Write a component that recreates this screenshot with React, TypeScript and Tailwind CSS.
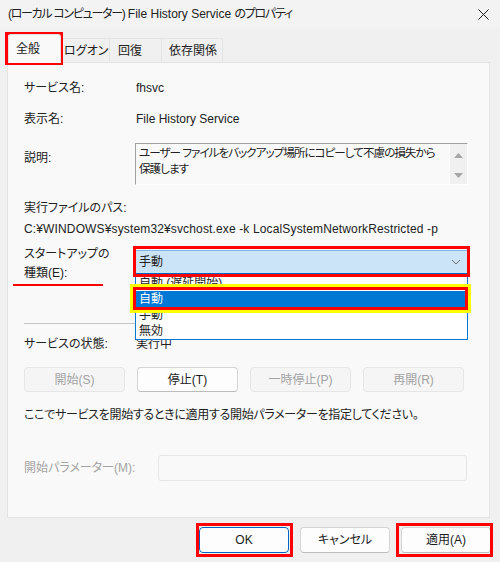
import React from "react";

function Btn({ label, disabled, primary, className = "" }: { label: string; disabled?: boolean; primary?: boolean; className?: string }) {
  return (
    <div
      className={
        "flex items-center justify-center rounded-[4px] border " +
        (disabled
          ? "bg-[#f5f5f5] border-[#e6e6e6] text-[#a3a3a3] "
          : primary
          ? "bg-[#fdfdfd] border-[#0067c0] text-[#1b1b1b] "
          : "bg-[#fdfdfd] border-[#d4d4d4] border-b-[#bcbcbc] text-[#1b1b1b] ") +
        className
      }
    >
      {label}
    </div>
  );
}

export default function App() {
  return (
    <div className="relative w-[500px] h-[562px] overflow-hidden bg-[#f0f0f0] text-[12px] text-[#222222] font-['Liberation_Sans','Noto_Sans_CJK_JP',sans-serif] [font-feature-settings:'palt']">
      {/* Title bar */}
      <div className="h-[28px] flex items-center justify-between pl-[8px] pr-[11px] bg-[#f3f3f3]">
        <span className="whitespace-nowrap">
          <span className="tracking-[-1.3px]">(ローカル コンピューター)</span> File History Service{" "}
          <span className="tracking-[-1.3px]">のプロパティ</span>
        </span>
        <svg width="11" height="11" viewBox="0 0 11 11">
          <path d="M0.5 0.5l10 10M10.5 0.5l-10 10" stroke="#1b1b1b" strokeWidth="1" />
        </svg>
      </div>

      {/* Tabs */}
      <div className="h-[34px] flex items-end pl-[8px]">
        <div className="relative z-10 -mb-px h-[29px] w-[53px] pl-[7px] flex items-center bg-[#f9f9f9] border border-b-0 border-[#e3e3e3] rounded-t-[3px]">全般</div>
        <div className="h-[24px] w-[49px] pl-[3px] flex items-center border-t border-r border-[#e3e3e3] bg-[#f0f0f0]">ログオン</div>
        <div className="h-[24px] w-[52px] pl-[8px] flex items-center border-t border-r border-[#e3e3e3] bg-[#f0f0f0]">回復</div>
        <div className="h-[24px] w-[61px] pl-[7px] flex items-center border-t border-r border-[#e3e3e3] bg-[#f0f0f0]">依存関係</div>
      </div>

      {/* Panel */}
      <div className="ml-[7px] w-[483px] h-[456px] border border-[#e3e3e3] bg-[#f9f9f9]">
        <div className="pl-[16px] flex flex-col">
          <div className="mt-[17px] h-4 leading-4 flex">
            <span className="w-[112px]">サービス名:</span>
            <span>fhsvc</span>
          </div>
          <div className="mt-[15px] h-4 leading-4 flex">
            <span className="w-[112px]">表示名:</span>
            <span>File History Service</span>
          </div>
          <div className="mt-[16px] flex items-start">
            <span className="w-[111px] mt-[7px] leading-4">説明:</span>
            <div className="w-[333px] h-[42px] flex border-t border-l border-[#a0a0a0] border-b border-r border-b-[#ffffff] border-r-[#ffffff]">
              <div className="flex-1 min-w-0 pl-[3px] pt-[1px] leading-4 whitespace-nowrap text-[11.6px] tracking-[-1px]">
                ユーザー ファイルをバックアップ場所にコピーして不慮の損失から
                <br />
                保護します
              </div>
              <div className="w-[17px] shrink-0 bg-[#f0f0f0] flex flex-col items-center justify-between pt-[9px] pb-[6px]">
                <svg width="9" height="5" viewBox="0 0 9 5">
                  <path d="M0 5L4.5 0L9 5Z" fill="#a6a6a6" />
                </svg>
                <svg width="9" height="5" viewBox="0 0 9 5">
                  <path d="M0 0L9 0L4.5 5Z" fill="#a6a6a6" />
                </svg>
              </div>
            </div>
          </div>
          <div className="mt-[15px] h-4 leading-4">実行ファイルのパス:</div>
          <div className="mt-[5px] h-4 leading-4 whitespace-nowrap tracking-[0.14px]">C:¥WINDOWS¥system32¥svchost.exe -k LocalSystemNetworkRestricted -p</div>
          <div className="mt-[8px] flex items-start">
            <span className="w-[111px] leading-[19px]">
              スタートアップの
              <br />
              種類(E):
            </span>
            <div className="mt-[5px] w-[333px] h-[24px] flex items-center justify-between pl-[3px] pr-[6px] bg-[#cce4f7] border border-[#7eb4ea] border-b-[#0067c0]">
              <span>手動</span>
              <svg width="10" height="6" viewBox="0 0 10 6">
                <path d="M1 1l4 4 4-4" fill="none" stroke="#6e6e6e" strokeWidth="1" />
              </svg>
            </div>
          </div>
          <div className="mt-[40px] w-[443px] h-px bg-[#c4c4c4]" />
          <div className="mt-[12px] h-4 leading-4 flex">
            <span className="w-[112px]">サービスの状態:</span>
            <span>実行中</span>
          </div>
          <div className="mt-[15px] flex gap-[12px]">
            <Btn label="開始(S)" disabled className="w-[101px] h-[25px]" />
            <Btn label="停止(T)" className="w-[101px] h-[25px]" />
            <Btn label="一時停止(P)" disabled className="w-[101px] h-[25px]" />
            <Btn label="再開(R)" disabled className="w-[101px] h-[25px]" />
          </div>
          <div className="mt-[15px] h-4 leading-4 whitespace-nowrap tracking-[-0.3px]">ここでサービスを開始するときに適用する開始パラメーターを指定してください。</div>
          <div className="mt-[32px] flex items-center">
            <span className="w-[134px] text-[#a3a3a3]">開始パラメーター(M):</span>
            <div className="w-[309px] h-[26px] border border-[#e6e6e6] rounded-[3px] bg-[#f9f9f9]" />
          </div>
        </div>
      </div>

      {/* Dialog buttons */}
      <div className="mt-[9px] flex justify-end gap-[11px] pr-[9px]">
        <Btn label="OK" primary className="w-[90px] h-[26px]" />
        <Btn label="キャンセル" className="w-[90px] h-[26px]" />
        <Btn label="適用(A)" className="w-[90px] h-[26px]" />
      </div>

      {/* Dropdown list (open combo) */}
      <div className="absolute left-[135px] top-[277px] w-[333px] h-[63px] overflow-hidden bg-white border-x border-b border-[#0078d4]">
        <div className="-mt-[2px] h-4 leading-4 pl-[3px]">自動 (遅延開始)</div>
        <div className="h-4 leading-4 pl-[3px] bg-[#0078d4] text-white">自動</div>
        <div className="h-4 leading-4 pl-[3px]">手動</div>
        <div className="h-4 leading-4 pl-[3px]">無効</div>
      </div>

      {/* Annotations */}
      <div className="absolute left-[5px] top-[32px] w-[58px] h-[33px] border-[3px] border-[#ff0000]" />
      <div className="absolute left-[133px] top-[246px] w-[337px] h-[31px] border-[3px] border-[#ff0000]" />
      <div className="absolute left-[13px] top-[284px] w-[90px] h-[2px] bg-[#ff0000]" />
      <div className="absolute left-[130px] top-[284px] w-[341px] h-[29px] border-[3px] border-[#ffff00]">
        <div className="w-full h-full border-[3px] border-[#ff0000]" />
      </div>
      <div className="absolute left-[196px] top-[523px] w-[97px] h-[34px] border-[3px] border-[#ff0000]" />
      <div className="absolute left-[396px] top-[523px] w-[97px] h-[34px] border-[3px] border-[#ff0000]" />
    </div>
  );
}
